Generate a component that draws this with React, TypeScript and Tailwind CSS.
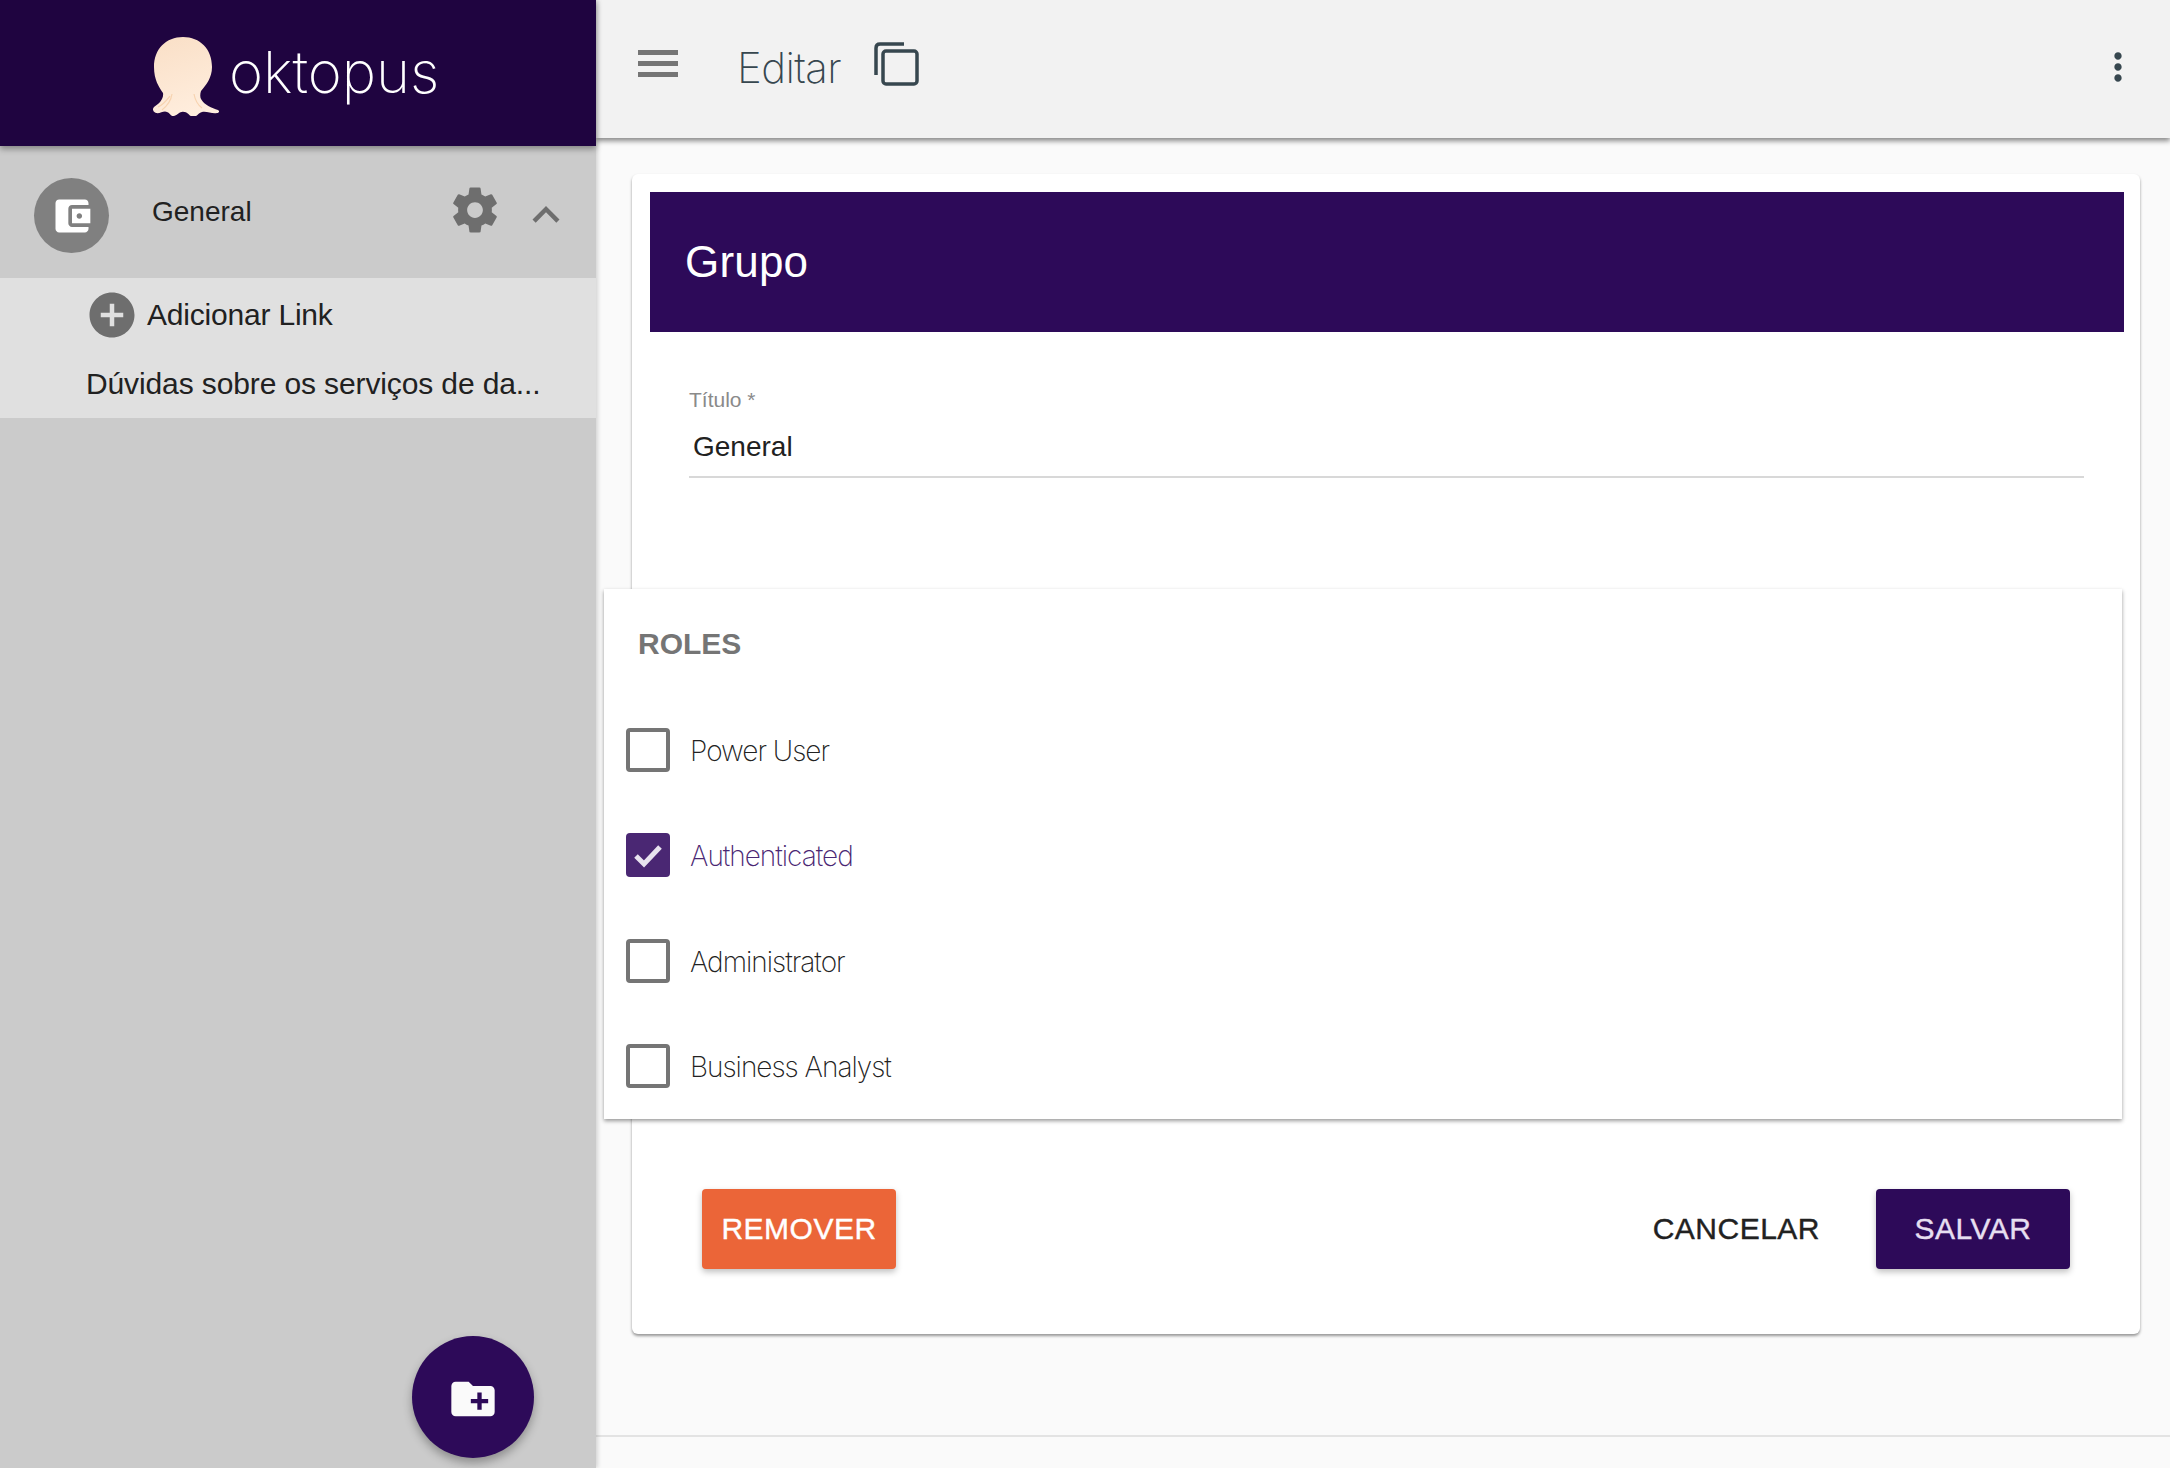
const sans = "font-['Liberation_Sans',Arial,sans-serif]";
const thin = "font-['Inter',sans-serif] font-extralight";

function Icon({ d, className }: { d: string; className?: string }) {
  return (
    <svg viewBox="0 0 24 24" fill="currentColor" className={className}>
      <path d={d} />
    </svg>
  );
}

const P = {
  wallet: "M21 18v1c0 1.1-.9 2-2 2H5c-1.11 0-2-.9-2-2V5c0-1.1.89-2 2-2h14c1.1 0 2 .9 2 2v1h-9c-1.11 0-2 .9-2 2v8c0 1.1.89 2 2 2h9zm-9-2h10V8H12v8zm4-2.5c-.83 0-1.5-.67-1.5-1.5s.67-1.5 1.5-1.5 1.5.67 1.5 1.5-.67 1.5-1.5 1.5z",
  gear: "M19.43 12.98c.04-.32.07-.64.07-.98s-.03-.66-.07-.98l2.11-1.65c.19-.15.24-.42.12-.64l-2-3.46c-.12-.22-.39-.3-.61-.22l-2.49 1c-.52-.4-1.08-.73-1.69-.98l-.38-2.65C14.46 2.18 14.25 2 14 2h-4c-.25 0-.46.18-.49.42l-.38 2.65c-.61.25-1.17.59-1.69.98l-2.49-1c-.23-.09-.49 0-.61.22l-2 3.46c-.13.22-.07.49.12.64l2.11 1.65c-.04.32-.07.65-.07.98s.03.66.07.98l-2.11 1.65c-.19.15-.24.42-.12.64l2 3.46c.12.22.39.3.61.22l2.49-1c.52.4 1.08.73 1.69.98l.38 2.65c.03.24.24.42.49.42h4c.25 0 .46-.18.49-.42l.38-2.65c.61-.25 1.17-.59 1.69-.98l2.49 1c.23.09.49 0 .61-.22l2-3.46c.12-.22.07-.49-.12-.64l-2.11-1.65zM12 15.5c-1.93 0-3.5-1.57-3.5-3.5s1.57-3.5 3.5-3.5 3.5 1.57 3.5 3.5-1.57 3.5-3.5 3.5z",
  less: "M12 8l-6 6 1.41 1.41L12 10.83l4.59 4.58L18 14z",
  add: "M12 2C6.48 2 2 6.48 2 12s4.48 10 10 10 10-4.48 10-10S17.52 2 12 2zm5 11h-4v4h-2v-4H7v-2h4V7h2v4h4v2z",
  folder: "M20 6h-8l-2-2H4c-1.11 0-1.99.89-1.99 2L2 18c0 1.11.89 2 2 2h16c1.11 0 2-.89 2-2V8c0-1.11-.89-2-2-2zm-1 8h-3v3h-2v-3h-3v-2h3V9h2v3h3v2z",
  kebab: "M12 8c1.1 0 2-.9 2-2s-.9-2-2-2-2 .9-2 2 .9 2 2 2zm0 2c-1.1 0-2 .9-2 2s.9 2 2 2 2-.9 2-2-.9-2-2-2zm0 6c-1.1 0-2 .9-2 2s.9 2 2 2 2-.9 2-2-.9-2-2-2z",
};

function Octopus() {
  return (
    <svg viewBox="0 0 68 80" className="w-[68px] h-[80px] shrink-0">
      <defs>
        <linearGradient id="oct" x1="0.3" y1="0" x2="0.6" y2="1">
          <stop offset="0" stopColor="#fae0c8" />
          <stop offset="1" stopColor="#ffeede" />
        </linearGradient>
      </defs>
      <path
        fill="url(#oct)"
        d="M31 1C14 1 2 13 2 31c0 13 5 20 9 26 1 6-4 11-9 14-2 2-1 5 2 6 4 1 8-3 11-1 3 1 4 5 7 4 4-1 6-5 10-4 4 0 5 4 9 5 4 0 5-4 9-5 5-1 10 2 15 1 2 0 3-2 1-3-6-2-14-5-17-11-1-2-1-5 0-8 5-6 11-13 11-24C60 13 48 1 31 1z"
      />
      <path fill="none" stroke="#f7d3b0" strokeWidth="1.2" d="M20 58c-1 7-5 12-10 16M42 58c1 6 4 11 8 14M18 60c-4 5-7 9-12 11" />
    </svg>
  );
}

function Role({ label, checked }: { label: string; checked?: boolean }) {
  return (
    <div className="flex items-center h-[105.5px] pl-[22px]">
      <div
        className={
          checked
            ? "w-[44px] h-[44px] rounded-[4px] bg-[#4a2773] flex items-center justify-center"
            : "w-[44px] h-[44px] rounded-[4px] border-[4px] border-[#757575]"
        }
      >
        {checked && (
          <svg viewBox="0 0 44 44" fill="none" stroke="#e8e3ef" strokeWidth="5" className="w-[44px] h-[44px]">
            <path d="M10 23l8 8 16-17" />
          </svg>
        )}
      </div>
      <span className={`ml-[20px] pt-[2px] text-[28px] tracking-[-1px] ${thin} ${checked ? "text-[#4a2773]" : "text-[#222]"}`}>{label}</span>
    </div>
  );
}

export default function App() {
  return (
    <div className={`flex w-[2170px] h-[1468px] overflow-hidden bg-[#fafafa] ${sans}`}>
      <aside className="relative w-[596px] shrink-0 flex flex-col bg-[#cbcbcb] shadow-[2px_0_4px_rgba(0,0,0,0.15)] z-10">
        <div className="h-[146px] shrink-0 bg-[#1f0440] flex items-center pl-[152px] gap-[9px] pt-[6px] shadow-[0_3px_6px_rgba(0,0,0,0.35)] z-10">
          <Octopus />
          <span className="text-[58px] text-white font-['Inter',sans-serif] font-extralight leading-none -mt-[8px]">oktopus</span>
        </div>
        <div className="h-[132px] shrink-0 flex items-center pl-[34px] pt-[7px] text-[#212121]">
          <div className="w-[75px] h-[75px] rounded-full bg-[#808080] flex items-center justify-center">
            <Icon d={P.wallet} className="w-[44px] h-[44px] text-white" />
          </div>
          <span className="ml-[43px] text-[28px] -mt-[8px]">General</span>
          <Icon d={P.gear} className="ml-auto -mt-[12px] w-[54px] h-[54px] text-[#6e6e6e]" />
          <Icon d={P.less} className="ml-[17px] mr-[23px] -mt-[2px] w-[54px] h-[54px] text-[#6e6e6e]" />
        </div>
        <div className="h-[140px] shrink-0 bg-[#e0e0e0] text-[#212121]">
          <div className="flex items-center h-[70px] pl-[85px] pt-[3px]">
            <Icon d={P.add} className="w-[54px] h-[54px] text-[#6e6e6e]" />
            <span className="ml-[8px] text-[30px] tracking-[-0.2px]">Adicionar Link</span>
          </div>
          <div className="h-[70px] pl-[86px] flex items-center text-[30px] tracking-[-0.12px] whitespace-nowrap">
            Dúvidas sobre os serviços de da...
          </div>
        </div>
        <div className="absolute left-[412px] top-[1336px] w-[122px] h-[122px] rounded-full bg-[#2d0a59] flex items-center justify-center shadow-[0_5px_10px_rgba(0,0,0,0.3)]">
          <Icon d={P.folder} className="w-[52px] h-[52px] mt-[3px] text-[#fafafa]" />
        </div>
      </aside>

      <div className="flex-1 flex flex-col min-w-0">
        <header className="h-[138px] shrink-0 bg-[#f2f2f2] flex items-center shadow-[0_3px_5px_rgba(0,0,0,0.45)] z-[5] pb-[4px]">
          <svg viewBox="0 0 40 27" className="ml-[42px] -mt-[8px] w-[40px] h-[27px] text-[#757575]" fill="currentColor">
            <rect width="40" height="5" />
            <rect y="11" width="40" height="5" />
            <rect y="22" width="40" height="5" />
          </svg>
          <span className={`ml-[59px] text-[42px] tracking-[-0.6px] text-[#37474f] ${thin}`}>Editar</span>
          <svg viewBox="0 0 46 44" className="ml-[32px] -mt-[6px] w-[46px] h-[44px] text-[#37474f]" fill="none" stroke="currentColor" strokeWidth="3.5">
            <path d="M3 33V6q0-4 4-4h24" />
            <rect x="10" y="9" width="34" height="33" rx="3" />
          </svg>
          <Icon d={P.kebab} className="ml-auto mr-[30px] w-[44px] h-[48px] text-[#37474f]" />
        </header>

        <main className="flex-1 min-h-0 pt-[36px] pl-[36px] pr-[30px]">
          <section className="h-[1160px] bg-white rounded-[6px] pt-[18px] pl-[18px] pr-[16px] shadow-[0_2px_3px_rgba(0,0,0,0.4)]">
            <div className="h-[140px] bg-[#2d0a59] flex items-center pl-[35px]">
              <h1 className="text-[44px] tracking-[0.2px] text-white font-normal">Grupo</h1>
            </div>
            <div className="h-[257px] pl-[39px] pr-[40px] pt-[56px]">
              <div className="text-[21px] leading-[24px] text-[#8a8a8a]">Título *</div>
              <div className="h-[66px] pl-[4px] pt-[17px] text-[28px] leading-[36px] text-[#212121] border-b-2 border-[#d8d8d8]">General</div>
            </div>
            <div className="-ml-[46px] w-[1518px] bg-white shadow-[0_2px_4px_rgba(0,0,0,0.4)]">
              <div className="h-[108px] pl-[34px] flex items-center text-[30px] font-bold text-[#757575]">ROLES</div>
              <Role label="Power User" />
              <Role label="Authenticated" checked />
              <Role label="Administrator" />
              <Role label="Business Analyst" />
            </div>
            <div className="mt-[70px] h-[80px] flex items-center pl-[52px] pr-[54px] text-[30px] tracking-[0.5px] [-webkit-text-stroke:0.4px]">
              <button className="w-[194px] h-[80px] rounded-[4px] bg-[#eb6538] text-white pb-[2px] shadow-[0_3px_6px_rgba(0,0,0,0.25)]">REMOVER</button>
              <button className="ml-auto mr-[56px] text-[#212121] pb-[2px]">CANCELAR</button>
              <button className="w-[194px] h-[80px] rounded-[4px] bg-[#2d0a59] text-[#e6dff0] pb-[2px] shadow-[0_3px_6px_rgba(0,0,0,0.25)]">SALVAR</button>
            </div>
          </section>
        </main>

        <footer className="h-[33px] shrink-0 border-t-2 border-[#e3e3e3] bg-[#fafafa]" />
      </div>
    </div>
  );
}
